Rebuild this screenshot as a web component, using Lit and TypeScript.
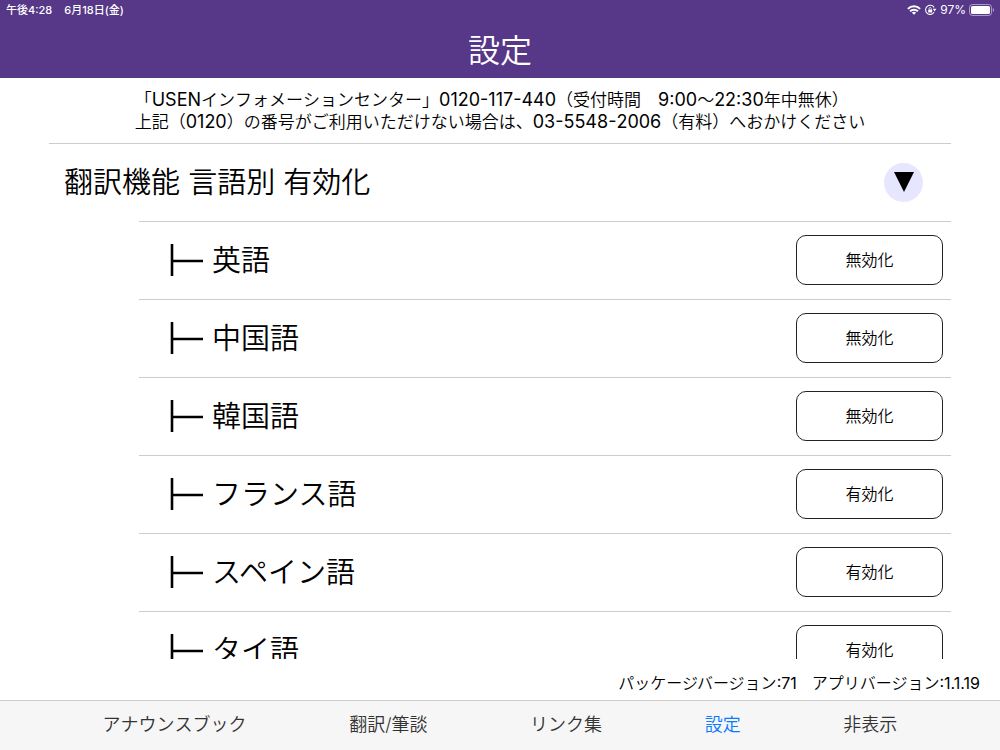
import { LitElement, html, css } from "lit";
import { customElement, state } from "lit/decorators.js";

interface Language {
  name: string;
  enabled: boolean;
}

const TABS = ["アナウンスブック", "翻訳/筆談", "リンク集", "設定", "非表示"];

@customElement("status-bar")
class StatusBar extends LitElement {
  static styles = css`
    :host {
      display: flex;
      justify-content: space-between;
      align-items: center;
      height: 20px;
      padding: 0 6px;
      font-size: 11px;
      font-weight: 500;
      line-height: 20px;
      color: #fff;
    }
    .group {
      display: flex;
      align-items: center;
      gap: 3px;
    }
    .clock {
      gap: 12px;
    }
    .percent {
      font-size: 12px;
      font-weight: 400;
    }
  `;

  render() {
    return html`
      <div class="group clock"><span>午後4:28</span><span>6月18日(金)</span></div>
      <div class="group">
        <svg width="14" height="10" viewBox="0 0 14 10" fill="none" stroke="#fff" stroke-width="2">
          <path d="M0.9 3.9a8.6 8.6 0 0 1 12.2 0" />
          <path d="M3.1 6.3a5.5 5.5 0 0 1 7.8 0" />
          <path d="M7 9.8 4.9 7.7a3 3 0 0 1 4.2 0z" fill="#fff" stroke="none" />
        </svg>
        <svg width="13" height="12" viewBox="0 0 13 12" fill="none" stroke="#fff">
          <path d="M10.1 3.4A4.6 4.6 0 1 0 10.1 8.2" stroke-width="1.1" />
          <path d="M8.8 4.8h3.6L10.6 7.4z" fill="#fff" stroke="none" />
          <rect x="4.2" y="5.4" width="4" height="3" rx="0.5" fill="#fff" stroke="none" />
          <path d="M5.1 5.6V4.6a1.1 1.1 0 0 1 2.2 0v1" stroke-width="0.8" />
        </svg>
        <span class="percent">97%</span>
        <svg width="25" height="12" viewBox="0 0 25 12">
          <rect x="0.5" y="0.5" width="22" height="11" rx="3" fill="none" stroke="#fff" stroke-opacity="0.5" />
          <rect x="2" y="2" width="19" height="8" rx="1.6" fill="#fff" />
          <path d="M23.8 4a2.2 2.2 0 0 1 0 4z" fill="#fff" fill-opacity="0.5" />
        </svg>
      </div>
    `;
  }
}

@customElement("language-row")
class LanguageRow extends LitElement {
  static properties = { name: { type: String }, enabled: { type: Boolean } };
  declare name: string;
  declare enabled: boolean;

  static styles = css`
    :host {
      display: flex;
      align-items: center;
      box-sizing: border-box;
      height: 78px;
      flex: none;
      padding: 0 8px 1px 31px;
      border-top: 1px solid #ccc;
    }
    .branch {
      flex: none;
      margin-right: 8px;
    }
    .name {
      flex: 1;
      padding-top: 1px;
      font-size: 29px;
      line-height: 40px;
    }
    .toggle {
      width: 147px;
      height: 50px;
      padding: 0 0 2px;
      border: 1px solid #222;
      border-radius: 10px;
      background: #fff;
      color: #000;
      font: inherit;
      font-size: 16px;
    }
  `;

  render() {
    return html`
      <svg class="branch" width="34" height="34" viewBox="0 0 34 34" fill="none" stroke="#000" stroke-width="2.6">
        <path d="M2 1v32M2 18h31" />
      </svg>
      <span class="name" id="name">${this.name}</span>
      <button
        class="toggle"
        id="toggle"
        aria-labelledby="name toggle"
        @click=${() => this.dispatchEvent(new CustomEvent("toggle"))}
      >${this.enabled ? "無効化" : "有効化"}</button>
    `;
  }
}

@customElement("app-root")
class AppRoot extends LitElement {
  @state() private expanded = true;
  @state() private tab = "設定";
  @state() private languages: Language[] = [
    { name: "英語", enabled: true },
    { name: "中国語", enabled: true },
    { name: "韓国語", enabled: true },
    { name: "フランス語", enabled: false },
    { name: "スペイン語", enabled: false },
    { name: "タイ語", enabled: false },
  ];

  static styles = css`
    :host {
      display: flex;
      flex-direction: column;
      height: 100vh;
      overflow: hidden;
      background: #fff;
      color: #000;
      font-family: Inter, "Noto Sans CJK JP", sans-serif;
      font-weight: 350;
    }
    .header {
      flex: none;
      background: #563788;
      color: #fff;
    }
    .title {
      margin: 0;
      padding: 7px 0 3px;
      font-size: 32px;
      font-weight: 350;
      line-height: 48px;
      text-align: center;
    }
    .content {
      flex: 1;
      min-height: 0;
      display: flex;
      flex-direction: column;
      padding: 0 49px;
    }
    .notice {
      display: flex;
      justify-content: center;
      padding: 11px 0 10px;
      font-size: 17px;
      line-height: 22px;
      font-kerning: none;
    }
    .notice-text {
      margin: 0;
    }
    .latin {
      font-size: 18px;
      font-weight: 400;
      line-height: 1;
    }
    .list {
      flex: 1;
      min-height: 0;
      overflow-y: auto;
      scrollbar-width: none;
      border-top: 1px solid #ccc;
    }
    .section {
      display: flex;
      align-items: center;
      justify-content: space-between;
      height: 77px;
      padding: 0 28px 0 15px;
    }
    .section-title {
      margin: 0;
      font-size: 29px;
      font-weight: 350;
      line-height: 40px;
    }
    .expander {
      display: grid;
      place-items: center;
      width: 39px;
      height: 39px;
      padding: 0 0 1px;
      border: 0;
      border-radius: 50%;
      background: #e6e6ff;
    }
    .languages {
      display: flex;
      flex-direction: column;
      padding-left: 90px;
    }
    .versions {
      flex: none;
      display: flex;
      justify-content: flex-end;
      gap: 15px;
      padding: 12px 20px 5px;
      font-size: 16px;
      line-height: 24px;
    }
    .number {
      font-weight: 400;
    }
    .tabs {
      flex: none;
      display: flex;
      justify-content: space-evenly;
      box-sizing: border-box;
      height: 50px;
      border-top: 1px solid #ccc;
      background: #f6f6f6;
    }
    .tab {
      padding: 0 0 5px;
      border: 0;
      background: none;
      color: #333;
      font: inherit;
      font-size: 18px;
      font-kerning: none;
    }
    .current {
      color: #0a7aff;
    }
  `;

  private toggle(index: number) {
    this.languages = this.languages.map((l, i) => (i === index ? { ...l, enabled: !l.enabled } : l));
  }

  render() {
    return html`
      <header class="header">
        <status-bar></status-bar>
        <h1 class="title">設定</h1>
      </header>
      <main class="content">
        <div class="notice">
          <p class="notice-text">
            「<span class="latin">USEN</span>インフォメーションセンター」<span class="latin">0120-117-440</span>（受付時間　<span class="latin">9:00</span>〜<span class="latin">22:30</span>年中無休）<br />
            上記（<span class="latin">0120</span>）の番号がご利用いただけない場合は、<span class="latin">03-5548-2006</span>（有料）へおかけください
          </p>
        </div>
        <div class="list">
          <div class="section">
            <h2 class="section-title">翻訳機能 言語別 有効化</h2>
            <button
              class="expander"
              aria-label="言語一覧"
              aria-expanded=${this.expanded}
              @click=${() => (this.expanded = !this.expanded)}
            >
              <svg width="20" height="20" viewBox="0 0 20 20"><path d="M0 0h20L10 20z" /></svg>
            </button>
          </div>
          ${this.expanded
            ? html`<div class="languages">
                ${this.languages.map(
                  (l, i) => html`<language-row
                    .name=${l.name}
                    .enabled=${l.enabled}
                    @toggle=${() => this.toggle(i)}
                  ></language-row>`
                )}
              </div>`
            : ""}
        </div>
      </main>
      <div class="versions">
        <span>パッケージバージョン<span class="number">:71</span></span>
        <span>アプリバージョン<span class="number">:1.1.19</span></span>
      </div>
      <nav class="tabs">
        ${TABS.map(
          (t) => html`<button class="tab ${t === this.tab ? "current" : ""}" @click=${() => (this.tab = t)}>${t}</button>`
        )}
      </nav>
    `;
  }
}
